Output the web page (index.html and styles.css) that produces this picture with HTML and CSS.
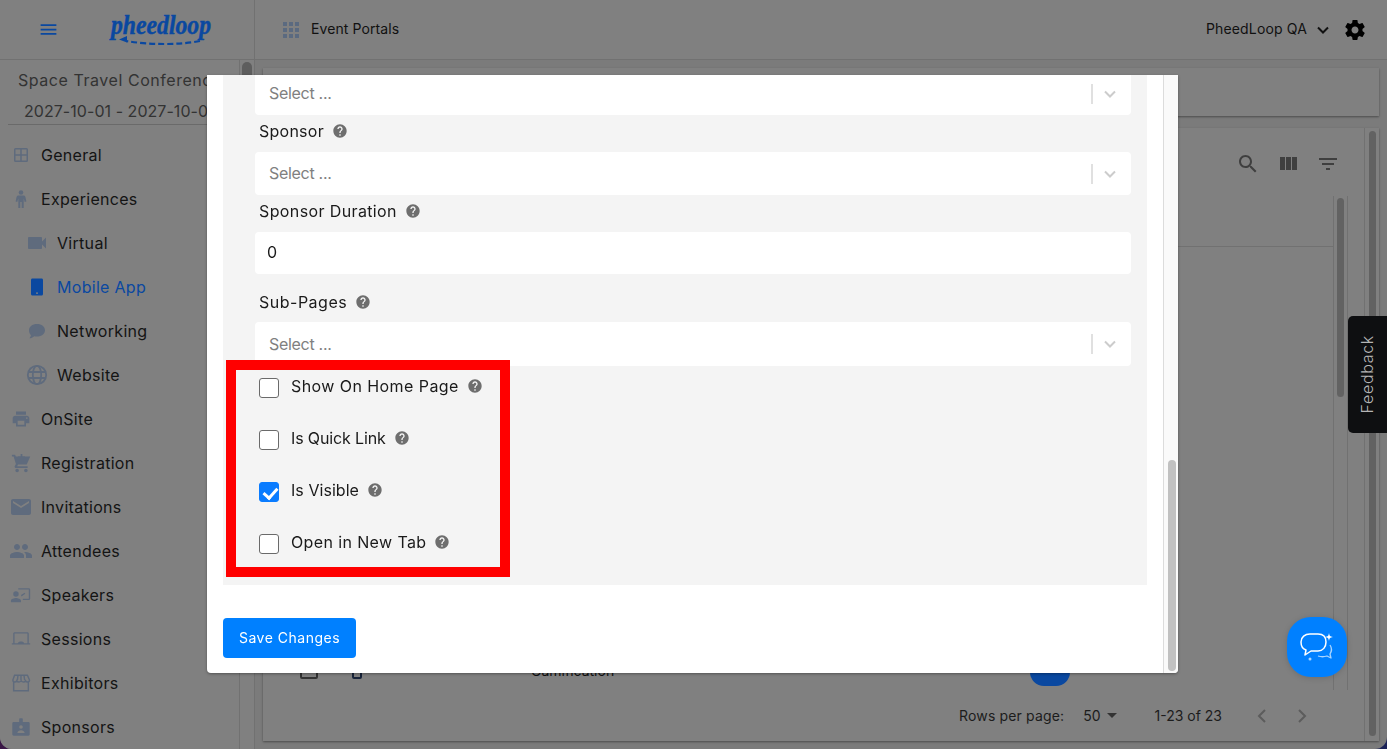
FILE: index.html
```html
<!DOCTYPE html>
<html lang="en">
<head>
<meta charset="utf-8">
<title>Event Portals</title>
<link rel="stylesheet" href="styles.css">
</head>
<body>
<svg class="defs" aria-hidden="true">
  <symbol id="i-menu" viewBox="0 0 24 24"><path d="M3 18h18v-2H3v2zm0-5h18v-2H3v2zm0-7v2h18V6H3z"/></symbol>
  <symbol id="i-apps" viewBox="0 0 16 16"><path d="M0 0h4v4H0zM6 0h4v4H6zM12 0h4v4h-4zM0 6h4v4H0zM6 6h4v4H6zM12 6h4v4h-4zM0 12h4v4H0zM6 12h4v4H6zM12 12h4v4h-4z"/></symbol>
  <symbol id="i-general" viewBox="0 0 24 24"><path fill-rule="evenodd" d="M6.500 5h11A1.500 1.500 0 0 1 19 6.500v11a1.500 1.500 0 0 1-1.500 1.500h-11A1.500 1.500 0 0 1 5 17.500v-11A1.500 1.500 0 0 1 6.500 5zm0 1.500v4.700h4.700V6.500zm6.300 0v4.700h4.700V6.500zm-6.300 6.300v4.700h4.700v-4.700zm6.300 0v4.700h4.700v-4.700z"/></symbol>
  <symbol id="i-man" viewBox="0 0 24 24"><circle cx="12" cy="5.500" r="2.300"/><path d="M9.500 8.500h5c1 0 1.800.7 2 1.700l.9 4.300-1.700.4-1-3.500V21h-2v-6h-1.400v6h-2v-9.600l-1 3.500-1.700-.4.900-4.300c.2-1 1-1.700 2-1.700z"/></symbol>
  <symbol id="i-video" viewBox="0 0 24 24"><path d="M17 10.500V7c0-.55-.45-1-1-1H4c-.55 0-1 .45-1 1v10c0 .55.45 1 1 1h12c.55 0 1-.45 1-1v-3.500l4 4v-11l-4 4z"/></symbol>
  <symbol id="i-phone" viewBox="0 0 24 24"><path fill-rule="evenodd" d="M7.500 3.500h9c1 0 1.500.6 1.500 1.500v14c0 .9-.5 1.500-1.500 1.500h-9C6.500 20.500 6 19.900 6 19V5c0-.9.5-1.500 1.500-1.500zM11 17.500v1.200h2v-1.200z"/></symbol>
  <symbol id="i-bubble" viewBox="0 0 24 24"><path d="M12 5c4.700 0 8 2.700 8 6.200s-3.300 6.300-8 6.300c-1 0-1.900-.1-2.700-.3C8 18.500 6 19.200 4.500 19.300c.7-.9 1.300-1.900 1.400-3.200C4.700 14.900 4 13.200 4 11.200 4 7.700 7.300 5 12 5z"/></symbol>
  <symbol id="i-globe" viewBox="0 0 24 24"><g fill="none" stroke="currentColor" stroke-width="1.800"><circle cx="12" cy="12" r="9.200"/><ellipse cx="12" cy="12" rx="4.200" ry="9.200"/><path d="M3 9h18M3 15h18"/></g></symbol>
  <symbol id="i-print" viewBox="0 0 24 24"><path d="M19 8H5c-1.660 0-3 1.340-3 3v6h4v4h12v-4h4v-6c0-1.660-1.340-3-3-3zm-3 11H8v-5h8v5zm3-7c-.55 0-1-.45-1-1s.45-1 1-1 1 .45 1 1-.45 1-1 1zm-1-9H6v4h12V3z"/></symbol>
  <symbol id="i-cart" viewBox="0 0 24 24"><path d="M11 9h2V6h3V4h-3V1h-2v3H8v2h3v3zm-4 9c-1.100 0-1.990.9-1.990 2S5.900 22 7 22s2-.9 2-2-.9-2-2-2zm10 0c-1.100 0-1.990.9-1.990 2s.89 2 1.990 2 2-.9 2-2-.9-2-2-2z"/><path d="M1 2h3.600l1 2H22l-4 9H8.100L7 15h12v2H5.200c-.9 0-1.400-1-1-1.800l1.400-2.600L3 4H1z"/></symbol>
  <symbol id="i-mail" viewBox="0 0 24 24"><path d="M20 4H4c-1.100 0-1.990.9-1.990 2L2 18c0 1.100.9 2 2 2h16c1.100 0 2-.9 2-2V6c0-1.100-.9-2-2-2zm0 4l-8 5-8-5V6l8 5 8-5v2z"/></symbol>
  <symbol id="i-people" viewBox="0 0 24 24"><path d="M16 11c1.660 0 2.990-1.340 2.990-3S17.660 5 16 5c-1.660 0-3 1.340-3 3s1.340 3 3 3zm-8 0c1.660 0 2.990-1.340 2.990-3S9.660 5 8 5C6.340 5 5 6.340 5 8s1.340 3 3 3zm0 2c-2.330 0-7 1.170-7 3.500V19h14v-2.500c0-2.330-4.670-3.500-7-3.500zm8 0c-.29 0-.62.02-.97.05 1.160.84 1.970 1.970 1.970 3.450V19h6v-2.500c0-2.330-4.670-3.500-7-3.500z"/></symbol>
  <symbol id="i-present" viewBox="0 0 24 24"><path d="M9 4.500h11.500c.8 0 1.500.7 1.500 1.500v10c0 .8-.7 1.500-1.500 1.500H14v-1.500h6.500V6H9z"/><circle cx="6.500" cy="11" r="3"/><path d="M1 20v-1.800c0-2 3.500-3 5.500-3s5.500 1 5.500 3V20zM12 12l4-2.500.7 1.200-4.200 2.800z"/></symbol>
  <symbol id="i-laptop" viewBox="0 0 24 24"><path d="M5 4.500h14c.8 0 1.500.7 1.500 1.500v10.500H22V18H2v-1.500h1.500V6c0-.8.7-1.500 1.500-1.500zm0 1.500v10.500h3.500c.3-1 1.800-1.700 3.500-1.700s3.200.7 3.500 1.700H19V6z"/></symbol>
  <symbol id="i-store" viewBox="0 0 24 24"><g fill="none" stroke="currentColor" stroke-width="1.600"><path d="M5 3.500h14l2.300 5.300c0 1.300-1 2.200-2.200 2.200-.9 0-1.700-.5-2.100-1.300-.4.800-1.200 1.300-2.300 1.300-1 0-1.800-.5-2.500-1.300-.7.800-1.500 1.300-2.500 1.300-1.100 0-1.900-.5-2.300-1.300-.4.800-1.200 1.300-2.100 1.300-1.200 0-2.200-.9-2.200-2.200z"/><path d="M4 11v9.500h16V11M8.700 4l-.7 5M12 4v5M15.300 4l.7 5"/></g></symbol>
  <symbol id="i-badge" viewBox="0 0 24 24"><path fill-rule="evenodd" d="M4 6.500h6V3.500c0-.8.7-1 1-1h2c.3 0 1 .2 1 1v3h6c1 0 1.500.6 1.500 1.500v12c0 .9-.5 1.500-1.500 1.500H4c-1 0-1.500-.6-1.500-1.500V8c0-.9.5-1.500 1.500-1.500zM12 10a2 2 0 1 0 0 4 2 2 0 0 0 0-4zm-4 8.500h8c0-1.700-2.200-3-4-3s-4 1.300-4 3z"/></symbol>
  <symbol id="i-search" viewBox="0 0 24 24"><path d="M15.500 14h-.79l-.28-.27C15.410 12.590 16 11.110 16 9.500 16 5.910 13.090 3 9.500 3S3 5.910 3 9.500 5.910 16 9.500 16c1.610 0 3.090-.59 4.230-1.570l.27.28v.79l5 4.990L20.490 19l-4.990-5zm-6 0C7.010 14 5 11.990 5 9.500S7.010 5 9.500 5 14 7.010 14 9.500 11.990 14 9.500 14z"/></symbol>
  <symbol id="i-columns" viewBox="0 0 24 24"><path d="M10 18h5V5h-5v13zm-6 0h5V5H4v13zM16 5v13h5V5h-5z"/></symbol>
  <symbol id="i-filter" viewBox="0 0 24 24"><path d="M10 18h4v-2h-4v2zM3 6v2h18V6H3zm3 7h12v-2H6v2z"/></symbol>
  <symbol id="i-gear" viewBox="0 0 24 24"><path d="M19.430 12.980c.04-.32.07-.64.07-.98s-.03-.66-.07-.98l2.110-1.650c.19-.15.24-.42.12-.64l-2-3.460c-.12-.22-.39-.3-.61-.22l-2.490 1c-.52-.4-1.080-.73-1.690-.98l-.38-2.650C14.460 2.180 14.250 2 14 2h-4c-.25 0-.46.18-.49.42l-.38 2.650c-.61.25-1.170.59-1.690.98l-2.490-1c-.23-.09-.49 0-.61.22l-2 3.460c-.13.22-.07.49.12.64l2.110 1.650c-.04.32-.07.65-.07.98s.03.66.07.98l-2.110 1.650c-.19.15-.24.42-.12.64l2 3.460c.12.22.39.3.61.22l2.490-1c.52.4 1.080.73 1.690.98l.38 2.650c.03.24.24.42.49.42h4c.25 0 .46-.18.49-.42l.38-2.650c.61-.25 1.170-.59 1.690-.98l2.490 1c.23.09.49 0 .61-.22l2-3.460c.12-.22.07-.49-.12-.64l-2.110-1.650zM12 15.500c-1.930 0-3.500-1.570-3.500-3.500s1.570-3.500 3.500-3.500 3.500 1.570 3.500 3.500-1.570 3.500-3.500 3.500z"/></symbol>
  <symbol id="i-help" viewBox="0 0 24 24"><path d="M12 2C6.480 2 2 6.480 2 12s4.480 10 10 10 10-4.480 10-10S17.520 2 12 2zm1 17h-2v-2h2v2zm2.070-7.750l-.9.920C13.450 12.900 13 13.500 13 15h-2v-.5c0-1.100.45-2.100 1.170-2.830l1.240-1.260c.37-.36.59-.86.59-1.410 0-1.100-.9-2-2-2s-2 .9-2 2H8c0-2.210 1.790-4 4-4s4 1.790 4 4c0 .88-.36 1.680-.93 2.250z"/></symbol>
  <symbol id="i-chev" viewBox="0 0 12 8"><path d="M1 1.500l5 5 5-5" fill="none" stroke="currentColor" stroke-width="2"/></symbol>
</svg>

<div class="app">
  <header class="topbar">
    <div class="brand">
      <svg class="ico menu-ico"><use href="#i-menu"/></svg>
      <svg class="logo" viewBox="0 0 102 38" role="img" aria-label="pheedloop">
        <text x="1" y="23" textLength="100" lengthAdjust="spacingAndGlyphs" class="logo-text">pheedloop</text>
        <path d="M90 30c-20 4-50 4-74 0" fill="none" stroke="currentColor" stroke-width="2.200" stroke-dasharray="6 3"/>
        <path d="M9 28.500l8-3.500v6.500z"/>
      </svg>
    </div>
    <div class="topbar-main">
      <svg class="apps-ico"><use href="#i-apps"/></svg>
      <span class="portal">Event Portals</span>
      <span class="org">PheedLoop QA</span>
      <svg class="org-chev"><use href="#i-chev"/></svg>
      <svg class="gear"><use href="#i-gear"/></svg>
    </div>
  </header>

  <div class="workspace">
    <aside class="sidebar">
      <div class="sidebar-scroll">
        <div class="event">
          <div class="event-name">Space Travel Conference</div>
          <div class="event-date">2027-10-01 - 2027-10-07</div>
        </div>
        <nav class="nav">
          <a class="nav-item"><span class="nav-ico"><svg><use href="#i-general"/></svg></span>General</a>
          <a class="nav-item"><span class="nav-ico"><svg><use href="#i-man"/></svg></span>Experiences</a>
          <a class="nav-item sub"><span class="nav-ico"><svg><use href="#i-video"/></svg></span>Virtual</a>
          <a class="nav-item sub active"><span class="nav-ico"><svg><use href="#i-phone"/></svg></span>Mobile App</a>
          <a class="nav-item sub"><span class="nav-ico"><svg><use href="#i-bubble"/></svg></span>Networking</a>
          <a class="nav-item sub"><span class="nav-ico"><svg><use href="#i-globe"/></svg></span>Website</a>
          <a class="nav-item"><span class="nav-ico"><svg class="s20"><use href="#i-print"/></svg></span>OnSite</a>
          <a class="nav-item"><span class="nav-ico"><svg class="s21"><use href="#i-cart"/></svg></span>Registration</a>
          <a class="nav-item"><span class="nav-ico"><svg><use href="#i-mail"/></svg></span>Invitations</a>
          <a class="nav-item"><span class="nav-ico"><svg><use href="#i-people"/></svg></span>Attendees</a>
          <a class="nav-item"><span class="nav-ico"><svg class="s22"><use href="#i-present"/></svg></span>Speakers</a>
          <a class="nav-item"><span class="nav-ico"><svg class="s22"><use href="#i-laptop"/></svg></span>Sessions</a>
          <a class="nav-item"><span class="nav-ico"><svg class="s22"><use href="#i-store"/></svg></span>Exhibitors</a>
          <a class="nav-item"><span class="nav-ico"><svg class="s22"><use href="#i-badge"/></svg></span>Sponsors</a>
        </nav>
      </div>
      <div class="side-track"><div class="side-thumb"></div></div>
    </aside>

    <main class="main">
      <div class="top-card"></div>
      <section class="table-card">
        <div class="table-body">
          <div class="toolbar">
            <svg class="tool"><use href="#i-search"/></svg>
            <svg class="tool"><use href="#i-columns"/></svg>
            <svg class="tool"><use href="#i-filter"/></svg>
          </div>
          <div class="table-scroll">
            <div class="table-grid">
              <div class="table-head"></div>
              <div class="table-row">
                <span class="row-check"></span>
                <span class="row-icon"></span>
                <span class="row-text">Gamification</span>
                <span class="row-pill"></span>
              </div>
            </div>
            <div class="inner-track"><div class="inner-thumb"></div></div>
          </div>
          <div class="pager">
            <span class="pager-label">Rows per page:</span>
            <span class="pager-size">50</span>
            <span class="caret"></span>
            <span class="pager-range">1-23 of 23</span>
            <svg class="pager-arrow" viewBox="0 0 24 24"><path d="M15 6l-6 6 6 6" fill="none" stroke="currentColor" stroke-width="2"/></svg>
            <svg class="pager-arrow" viewBox="0 0 24 24"><path d="M9 6l6 6-6 6" fill="none" stroke="currentColor" stroke-width="2"/></svg>
          </div>
        </div>
        <div class="outer-track"><div class="outer-thumb"></div></div>
      </section>
    </main>
  </div>
</div>

<div class="backdrop">
  <div class="modal">
    <div class="modal-content">
      <form class="panel">
        <div class="select"><span>Select ...</span><i class="sep"></i><svg class="sel-chev"><use href="#i-chev"/></svg></div>
        <div class="label">Sponsor <svg class="help"><use href="#i-help"/></svg></div>
        <div class="select"><span>Select ...</span><i class="sep"></i><svg class="sel-chev"><use href="#i-chev"/></svg></div>
        <div class="label label-wide">Sponsor Duration <svg class="help"><use href="#i-help"/></svg></div>
        <div class="text-input">0</div>
        <div class="label label-tall">Sub-Pages <svg class="help"><use href="#i-help"/></svg></div>
        <div class="select tall"><span>Select ...</span><i class="sep"></i><svg class="sel-chev"><use href="#i-chev"/></svg></div>
        <div class="checks">
          <label class="check"><input type="checkbox"><span class="t-home">Show On Home Page</span><svg class="help"><use href="#i-help"/></svg></label>
          <label class="check"><input type="checkbox"><span class="t-quick">Is Quick Link</span><svg class="help"><use href="#i-help"/></svg></label>
          <label class="check"><input type="checkbox" checked><span class="t-visible">Is Visible</span><svg class="help"><use href="#i-help"/></svg></label>
          <label class="check"><input type="checkbox"><span class="t-tab">Open in New Tab</span><svg class="help"><use href="#i-help"/></svg></label>
          <div class="highlight"></div>
        </div>
      </form>
      <button class="save" type="button">Save Changes</button>
    </div>
    <div class="modal-track"><div class="modal-thumb"></div></div>
  </div>
</div>

<div class="feedback"><span>Feedback</span></div>
<button class="chat" type="button" aria-label="Chat">
  <svg viewBox="0 0 60 60" width="60" height="60">
    <path d="M23 17h8c5 0 8 3 8 8s-3 9-8 9h-7l-6 4 1-5c-3-1-5-4-5-8 0-5 4-8 9-8z" fill="none" stroke="#fff" stroke-width="1.500" stroke-linejoin="round"/>
    <path d="M43 28c2 3 2 6 0 9l1 4-4-2c-3 1-6 1-9 0" fill="none" stroke="#a9d4ff" stroke-width="1.300" stroke-linejoin="round"/>
    <path d="M42 16c.5 3 1 3.500 4 4-3 .5-3.500 1-4 4-.5-3-1-3.500-4-4 3-.5 3.500-1 4-4z" fill="#fff"/>
    <circle cx="23" cy="42" r="1.500" fill="#a9d4ff"/>
  </svg>
</button>
</body>
</html>
```

FILE: styles.css
```css
* { box-sizing: border-box; }
html, body { height: 100%; }
body {
  margin: 0;
  overflow: hidden;
  font-family: "Inter", "Noto Sans", sans-serif;
  color: #111;
  background: linear-gradient(90deg, #3a1746, #1b2258);
}
.defs { display: none; }
svg { fill: currentColor; display: block; flex: none; }

.app {
  height: 749px;
  display: flex;
  flex-direction: column;
  background: #7b7b7b;
  border-radius: 0 0 12px 12px;
  overflow: hidden;
}

/* top bar */
.topbar {
  height: 60px;
  flex: none;
  display: flex;
  background: #808080;
  border-bottom: 1px solid #717171;
}
.brand {
  width: 255px;
  flex: none;
  display: flex;
  align-items: center;
  padding-left: 38px;
  border-right: 1px solid #717171;
  color: #0a48a0;
}
.menu-ico { width: 21px; height: 21px; }
.logo { width: 102px; height: 38px; margin-left: 51px; overflow: visible; }
.logo-text {
  font-family: "Liberation Serif", serif;
  font-style: italic;
  font-weight: 700;
  font-size: 28px;
  stroke: currentColor;
  stroke-width: .5px;
}
.topbar-main {
  flex: 1;
  display: flex;
  align-items: center;
  padding: 0 20px 0 28px;
}
.apps-ico { width: 16px; height: 16px; color: #5b6a80; }
.portal { margin: 0 0 2px 12px; font-size: 14px; letter-spacing: .1px; color: #111; }
.org { margin: 0 0 2px auto; font-size: 14px; color: #111; letter-spacing: .15px; }
.org-chev { width: 12px; height: 8px; margin-left: 10px; color: #111; }
.gear { width: 24px; height: 24px; margin-left: 14px; color: #000; }

/* layout under top bar */
.workspace { flex: 1; min-height: 0; display: flex; }
.sidebar {
  width: 255px;
  flex: none;
  display: flex;
  background: #808080;
  border-right: 1px solid #717171;
}
.sidebar-scroll { flex: 1; min-width: 0; overflow: hidden; border-right: 1px solid #717171; }
.side-track { width: 14px; flex: none; padding: 2px 2px 0; }
.side-thumb { height: 32px; border-radius: 5px; background: #5e5e5e; }

.event {
  height: 65px;
  margin: 0 32px 0 8px;
  padding-top: 8px;
  border-bottom: 1px solid #6a6a6a;
  color: #333;
  font-size: 16px;
  white-space: nowrap;
}
.event-name { padding-left: 10px; height: 31px; line-height: 24px; letter-spacing: .55px; }
.event-date { padding-left: 16px; line-height: 24px; letter-spacing: .05px; }
.nav { padding-top: 8px; display: flex; flex-direction: column; }
.nav-item {
  height: 44px;
  flex: none;
  display: flex;
  align-items: center;
  gap: 8px;
  padding-left: 9px;
  font-size: 16px;
  letter-spacing: .3px;
  color: #141414;
}
.nav-item.sub { padding-left: 25px; }
.nav-item.active { color: #0a48a0; }
.nav-ico {
  width: 24px;
  height: 24px;
  flex: none;
  display: flex;
  align-items: center;
  justify-content: center;
  color: #5f6b7d;
}
.nav-item.active .nav-ico { color: #0a48a0; }
.nav-ico svg { width: 24px; height: 24px; }
.nav-ico svg.s20 { width: 20px; height: 20px; }
.nav-ico svg.s21 { width: 21px; height: 21px; }
.nav-ico svg.s22 { width: 22px; height: 22px; }

/* main */
.main {
  flex: 1;
  min-width: 0;
  display: flex;
  flex-direction: column;
  gap: 12px;
  padding: 8px;
}
.top-card {
  height: 48px;
  flex: none;
  background: #808080;
  box-shadow: 0 1px 2px #4c4c4c;
}
.table-card {
  flex: 1;
  min-height: 0;
  display: flex;
  background: #808080;
  box-shadow: 0 1px 2px #4c4c4c;
}
.table-body { flex: 1; min-width: 0; display: flex; flex-direction: column; }
.outer-track {
  width: 15px;
  flex: none;
  display: flex;
  padding: 3px 3px 5px 4px;
  border-left: 1px solid #717171;
}
.outer-thumb { flex: 1; border-radius: 4px; background: #626262; }
.toolbar {
  height: 68px;
  flex: none;
  display: flex;
  justify-content: flex-end;
  align-items: flex-start;
  gap: 16px;
  padding: 24px 24px 0 0;
}
.tool { width: 24px; height: 24px; color: #3f3f3f; }
.table-scroll { flex: 1; min-height: 0; display: flex; margin-right: 16px; }
.table-grid { flex: 1; min-width: 0; }
.table-head { height: 51px; border-bottom: 1px solid #717171; }
.table-row {
  display: grid;
  grid-template-columns: 52px 179px 499px 40px;
  align-items: center;
  height: 32px;
  margin-top: 407px;
  padding-left: 37px;
}
.row-check { width: 18px; height: 18px; border: 2px solid #333; border-radius: 2px; }
.row-icon { width: 10px; height: 18px; border: 2px solid #17233a; border-radius: 5px 5px 2px 2px; }
.row-text { font-size: 14px; color: #111; }
.row-pill { height: 32px; border-radius: 14px; background: #0a48a0; }
.inner-track { width: 15px; flex: none; padding: 2px 3px; border: solid #717171; border-width: 0 1px; }
.inner-thumb { height: 199px; border-radius: 4px; background: #626262; }
.pager {
  height: 51px;
  flex: none;
  display: flex;
  align-items: center;
  padding: 0 50px 0 0;
  justify-content: flex-end;
  font-size: 14px;
  color: #1c1c1c;
}
.pager-label { letter-spacing: .15px; }
.pager-size { margin-left: 19px; }
.caret { margin: 0 0 0 6px; border: 5px solid transparent; border-top-color: #333; border-bottom: 0; }
.pager-range { margin-left: 38px; margin-right: 28px; }
.pager-arrow { width: 24px; height: 24px; color: #5c5c5c; margin-left: 16px; }
.pager-range + .pager-arrow { margin-left: 0; }

/* modal */
.backdrop {
  position: fixed;
  inset: 0;
  display: flex;
  justify-content: center;
  align-items: flex-start;
  padding: 75px 2px 76px 0;
}
.modal {
  width: 971px;
  height: 598px;
  display: flex;
  background: #fff;
  border-radius: 0 0 4px 4px;
  overflow: hidden;
  box-shadow: 0 1px 3px rgba(0, 0, 0, .35);
}
.modal-content { flex: 1; min-width: 0; padding: 0 16px; }
.modal-track {
  width: 15px;
  flex: none;
  padding: 385px 2px 2px 4px;
  background: #fafafa;
  border-left: 1px solid #dcdcdc;
}
.modal-thumb { height: 211px; border-radius: 4px; background: #c1c1c1; }
.panel {
  margin-top: -3px;
  padding: 0 16px 31px 32px;
  background: #f4f4f4;
  display: flex;
  flex-direction: column;
}
.select, .text-input {
  height: 43px;
  flex: none;
  display: flex;
  align-items: center;
  background: #fff;
  border-radius: 4px;
  font-size: 16px;
}
.select { padding: 0 15px 0 14px; color: #808080; }
.select span { margin-bottom: 2px; letter-spacing: -.3px; }
.select.tall { height: 44px; }
.select.tall span { margin-bottom: 0; }
.select .sep { width: 2px; height: 20px; margin-left: auto; background: #e0e0e0; }
.sel-chev { width: 12px; height: 8px; margin-left: 11px; color: #ccc; }
.text-input { height: 42px; padding: 0 0 2px 12px; color: #1a1a1a; }
.label {
  height: 37px;
  flex: none;
  display: flex;
  align-items: center;
  gap: 8px;
  padding: 0 0 6px 4px;
  font-size: 16px;
  letter-spacing: .25px;
  color: #1a1a1a;
}
.label-wide { letter-spacing: .38px; }
.label-tall { height: 48px; padding: 8px 0 0 4px; letter-spacing: .5px; }
.help { width: 16px; height: 16px; color: #6e6e6e; }
.checks {
  position: relative;
  display: flex;
  flex-direction: column;
  gap: 32px;
  padding: 12px 0 0 4px;
}
.check {
  height: 20px;
  display: flex;
  align-items: center;
  font-size: 16px;
  color: #1a1a1a;
}
.check span { margin: -4px 8px 0 12px; }
.t-home { letter-spacing: .43px; }
.t-quick { letter-spacing: -.13px; }
.t-visible { letter-spacing: .05px; }
.t-tab { letter-spacing: .38px; }
.check .help { margin-top: -4px; }
.check input {
  appearance: none;
  position: relative;
  width: 20px;
  height: 20px;
  margin: 0;
  flex: none;
  background: #fff;
  border: 1px solid #6a6a6a;
  border-radius: 3px;
}
.check input:checked { background: #0a7cff; border-color: #0a7cff; }
.check input:checked::after {
  content: "";
  position: absolute;
  left: 6px;
  top: 2px;
  width: 6px;
  height: 11px;
  border: solid #fff;
  border-width: 0 3px 3px 0;
  transform: rotate(42deg);
}
.highlight {
  position: absolute;
  left: -29px;
  top: -6px;
  width: 284px;
  height: 217px;
  border: 10px solid #f00;
  pointer-events: none;
}
.save {
  display: block;
  width: 133px;
  height: 40px;
  margin-top: 33px;
  padding: 0 0 2px;
  border: 0;
  border-radius: 4px;
  background: #0080ff;
  color: #fff;
  font: 14px "Inter", "Noto Sans", sans-serif;
  letter-spacing: .5px;
}

/* floating widgets */
.feedback {
  position: fixed;
  right: 0;
  top: 316px;
  width: 39px;
  height: 117px;
  display: flex;
  align-items: center;
  justify-content: center;
  padding-right: 2px;
  background: #0e0f11;
  border-radius: 5px 0 0 5px;
}
.feedback span {
  writing-mode: vertical-rl;
  transform: rotate(180deg);
  font-size: 16px;
  font-weight: 300;
  letter-spacing: .7px;
  color: #b5b5b5;
}
.chat {
  position: fixed;
  left: 1287px;
  top: 617px;
  width: 60px;
  height: 60px;
  padding: 0;
  border: 0;
  border-radius: 24px;
  background: #0080ff;
  box-shadow: 0 1px 6px rgba(0, 0, 0, .15);
}
```
